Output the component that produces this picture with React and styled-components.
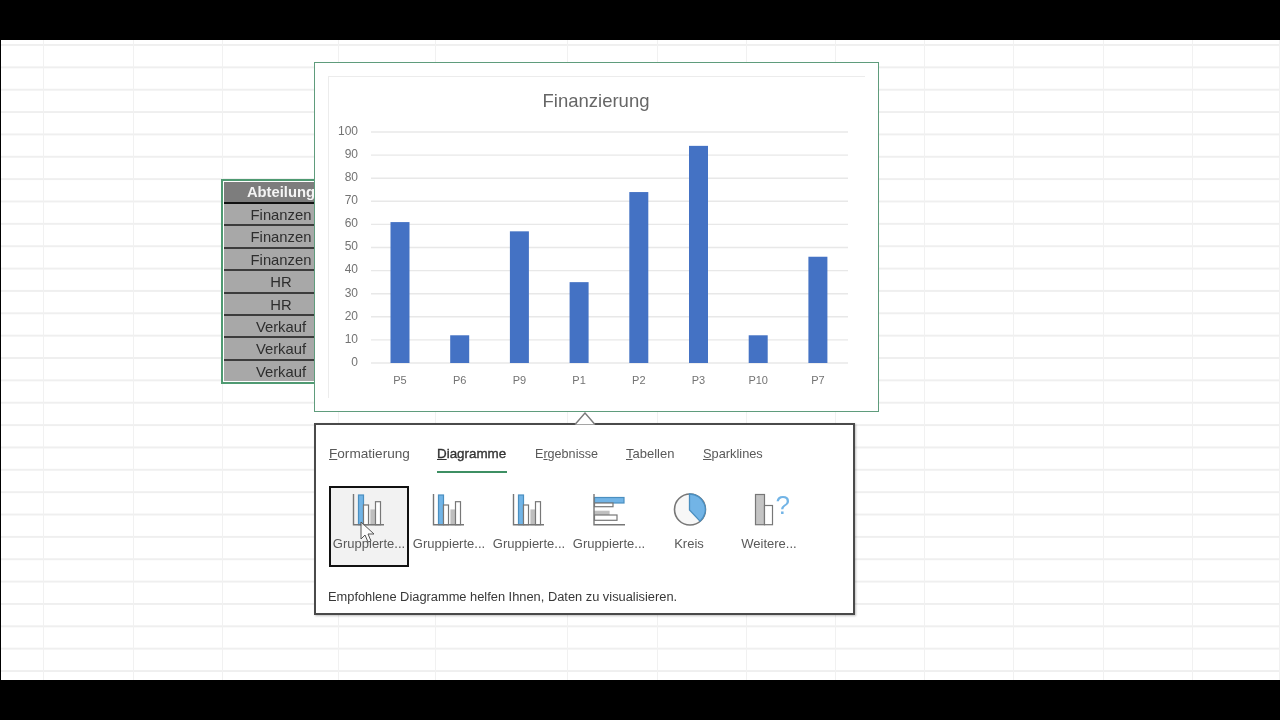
import React from "react";
import styled, { createGlobalStyle } from "styled-components";

const GlobalStyle = createGlobalStyle`
  html, body {
    margin: 0;
    padding: 0;
    background: #000;
    font-family: "Liberation Sans", Arial, sans-serif;
  }
`;

const Page = styled.div`
  width: 1280px;
  height: 720px;
  display: flex;
  flex-direction: column;
  justify-content: center;
  overflow: hidden;
  background: #000;
`;

const Sheet = styled.div`
  position: relative;
  height: 640px;
  margin-left: 1px;
  display: flex;
  background-color: #fff;
  background-image: linear-gradient(#efefef 0, #efefef 1.7px, transparent 1.7px);
  background-size: 100% 22.37px;
  background-position: 0 4px;
  filter: blur(0.6px);
`;

const Column = styled.div`
  flex: none;
  width: ${(p) => p.$width}px;
  height: 100%;
  box-sizing: border-box;
  border-right: 1.7px solid #f1f1f1;
`;

const DataTable = styled.div`
  position: absolute;
  left: 220px;
  top: 139px;
  width: 114px;
  padding: 1px;
  border: 2px solid #4f9a72;
  background: #fff;
  color: #2e2e2e;
  font-size: 14.8px;
  text-align: center;
`;

const HeaderCell = styled.div`
  height: 20px;
  line-height: 20px;
  background: #7d7d7d;
  border-bottom: 2px solid #111;
  color: #f4f4f4;
  font-weight: bold;
`;

const DataCell = styled.div`
  height: 20.4px;
  line-height: 23px;
  background: #a8a8a8;
  border-bottom: 2px solid #3c3c3c;
  &:last-child {
    border-bottom: 0;
  }
`;

const ChartPanel = styled.div`
  position: absolute;
  left: 313px;
  top: 22px;
  width: 565px;
  height: 350px;
  box-sizing: border-box;
  padding: 13px;
  background: #fff;
  border: 1.5px solid #5f9c7c;
`;

const ChartFrame = styled.div`
  height: 100%;
  box-sizing: border-box;
  border-top: 1.5px solid #ececec;
  border-left: 1.5px solid #ececec;
`;

const Popup = styled.div`
  position: absolute;
  left: 313px;
  top: 383px;
  width: 541px;
  height: 192px;
  box-sizing: border-box;
  padding: 19px 13px 0;
  background: #fff;
  border: 2px solid #4a4a4a;
  box-shadow: 1px 1px 2px rgba(0, 0, 0, 0.25);
`;

const Caret = styled.svg`
  position: absolute;
  left: 258px;
  top: -13px;
  display: block;
`;

const TabRow = styled.div`
  display: flex;
  gap: 28px;
  height: 42px;
`;

const Tab = styled.div`
  flex: none;
  width: ${(p) => p.$width}px;
  height: 27px;
  line-height: 20px;
  white-space: nowrap;
  font-size: ${(p) => p.$size}px;
  color: ${(p) => (p.$active ? "#333" : "#595959")};
  -webkit-text-stroke: ${(p) => (p.$active ? "0.35px #333" : "0")};
  border-bottom: 2px solid ${(p) => (p.$active ? "#3d8f63" : "transparent")};
`;

const TileRow = styled.div`
  display: flex;
  height: 103px;
`;

const Tile = styled.div`
  position: relative;
  flex: none;
  width: 80px;
  height: 81px;
  box-sizing: border-box;
  display: flex;
  flex-direction: column;
  align-items: center;
  padding-top: 6px;
  background: ${(p) => (p.$selected ? "#f2f2f2" : "transparent")};
  outline: ${(p) => (p.$selected ? "2px solid #111" : "none")};
  outline-offset: -2px;
`;

const TileLabel = styled.div`
  margin-top: 8px;
  font-size: 13px;
  line-height: 16px;
  color: #595959;
  white-space: nowrap;
`;

const Hint = styled.div`
  margin-left: -1px;
  font-size: 12.85px;
  line-height: 16px;
  color: #383838;
`;

const Pointer = styled.svg`
  position: absolute;
  left: 30px;
  top: 34px;
`;

const MoreSvg = styled.svg`
  margin-top: -4px;
`;

const BLUE = "#72b4e6";
const BLUE_LINE = "#4b8fc0";
const GRAY_LINE = "#777";

function ColumnIcon() {
  return (
    <svg width="36" height="36" viewBox="0 0 36 36" fill="none" strokeWidth="1.2">
      <rect x="7.5" y="3" width="5" height="29.7" fill={BLUE} stroke={BLUE_LINE} />
      <rect x="12.5" y="13" width="5" height="19.7" fill="#fff" stroke={GRAY_LINE} />
      <rect x="20" y="18" width="4.5" height="14.7" fill="#bfbfbf" stroke="#bfbfbf" />
      <rect x="24.5" y="9.7" width="5" height="23" fill="#fff" stroke={GRAY_LINE} />
      <path d="M2.5 2v30.7H33" stroke={GRAY_LINE} strokeWidth="1.4" />
    </svg>
  );
}

function BarIcon() {
  return (
    <svg width="36" height="36" viewBox="0 0 36 36" fill="none" strokeWidth="1.2">
      <rect x="3.5" y="5.5" width="29.5" height="5.5" fill={BLUE} stroke={BLUE_LINE} />
      <rect x="3.5" y="11" width="18.5" height="3.7" fill="#fff" stroke={GRAY_LINE} />
      <rect x="3.5" y="19.3" width="14.5" height="3.7" fill="#bfbfbf" stroke="#bfbfbf" />
      <rect x="3.5" y="23" width="22.5" height="5.3" fill="#fff" stroke={GRAY_LINE} />
      <path d="M3 2v30.7h31" stroke={GRAY_LINE} strokeWidth="1.4" />
    </svg>
  );
}

function PieIcon() {
  return (
    <svg width="36" height="36" viewBox="0 0 36 36" fill="none">
      <circle cx="19" cy="17.5" r="15.5" fill="#f7f7f7" stroke={GRAY_LINE} strokeWidth="1.6" />
      <path d="M18.5 2a15.5 15.5 0 0 1 10.5 27.2L18.5 18z" fill={BLUE} stroke={BLUE_LINE} strokeWidth="1.3" />
    </svg>
  );
}

function MoreIcon() {
  return (
    <MoreSvg width="42" height="40" viewBox="-3 -4 42 40" fill="none" strokeWidth="1.2">
      <rect x="4.5" y="2.5" width="9" height="30.2" fill="#c4c4c4" stroke={GRAY_LINE} />
      <rect x="13.5" y="13.5" width="8" height="19.2" fill="#fff" stroke={GRAY_LINE} />
      <text x="24.5" y="22" fontSize="26" fill={BLUE} stroke="none" fontFamily="Liberation Sans, sans-serif">
        ?
      </text>
    </MoreSvg>
  );
}

const yLabels = [100, 90, 80, 70, 60, 50, 40, 30, 20, 10, 0];
const bars = [
  { name: "P5", value: 61 },
  { name: "P6", value: 12 },
  { name: "P9", value: 57 },
  { name: "P1", value: 35 },
  { name: "P2", value: 74 },
  { name: "P3", value: 94 },
  { name: "P10", value: 12 },
  { name: "P7", value: 46 },
];

// svg coordinates start at the frame corner (329, 77)
function ColumnChart() {
  const base = 286;
  const step = 2.31;
  return (
    <svg width="530" height="318" viewBox="0 0 530 318" fontFamily="Liberation Sans, sans-serif">
      <text x="267" y="30" textAnchor="middle" fontSize="18.5" fill="#666">
        Finanzierung
      </text>
      {yLabels.map((v) => {
        const y = base - v * step;
        return (
          <g key={v}>
            <line x1="42" x2="519" y1={y} y2={y} stroke="#e8e8e8" strokeWidth="1.4" />
            <text x="29" y={y + 2.8} textAnchor="end" fontSize="12" fill="#737373">
              {v}
            </text>
          </g>
        );
      })}
      {bars.map((b, i) => {
        const cx = 71 + i * 59.7;
        return (
          <g key={b.name}>
            <rect x={cx - 9.5} y={base - b.value * step} width="19" height={b.value * step} fill="#4472c4" />
            <text x={cx} y="307" textAnchor="middle" fontSize="11" fill="#737373">
              {b.name}
            </text>
          </g>
        );
      })}
    </svg>
  );
}

const columnWidths = [43, 90, 89, 116, 97, 132, 90, 89, 89, 89, 89, 90, 89, 87];
const departments = ["Finanzen", "Finanzen", "Finanzen", "HR", "HR", "Verkauf", "Verkauf", "Verkauf"];
const tabs = [
  { before: "", key: "F", after: "ormatierung", width: 80, size: 13.6 },
  { before: "", key: "D", after: "iagramme", width: 70, size: 13.4, active: true },
  { before: "E", key: "r", after: "gebnisse", width: 63, size: 12.6 },
  { before: "", key: "T", after: "abellen", width: 49, size: 13 },
  { before: "", key: "S", after: "parklines", width: 60, size: 12.8 },
];
const tiles = [
  { label: "Gruppierte...", Icon: ColumnIcon, selected: true },
  { label: "Gruppierte...", Icon: ColumnIcon },
  { label: "Gruppierte...", Icon: ColumnIcon },
  { label: "Gruppierte...", Icon: BarIcon },
  { label: "Kreis", Icon: PieIcon },
  { label: "Weitere...", Icon: MoreIcon },
];

function App() {
  return (
    <Page>
      <GlobalStyle />
      <Sheet>
        {columnWidths.map((w, i) => (
          <Column key={i} $width={w} />
        ))}

        <DataTable>
          <HeaderCell>Abteilung</HeaderCell>
          {departments.map((d, i) => (
            <DataCell key={i}>{d}</DataCell>
          ))}
        </DataTable>

        <ChartPanel>
          <ChartFrame>
            <ColumnChart />
          </ChartFrame>
        </ChartPanel>

        <Popup>
          <Caret width="22" height="13" viewBox="0 0 22 13" fill="none">
            <path d="M1 12.5L11 1l10 11.5" fill="#fff" stroke="#7a7a7a" strokeWidth="1.4" />
          </Caret>
          <TabRow>
            {tabs.map((t) => (
              <Tab key={t.key} $active={t.active} $width={t.width} $size={t.size}>
                {t.before}
                <u>{t.key}</u>
                {t.after}
              </Tab>
            ))}
          </TabRow>
          <TileRow>
            {tiles.map(({ label, Icon, selected }, i) => (
              <Tile key={i} $selected={selected}>
                <Icon />
                <TileLabel>{label}</TileLabel>
                {selected && (
                  <Pointer width="18" height="24" viewBox="0 0 18 24">
                    <path d="M2 2v17l4-4 3 7 3-1-3-7h6z" fill="#fff" fillOpacity="0.75" stroke="#555" strokeWidth="1" />
                  </Pointer>
                )}
              </Tile>
            ))}
          </TileRow>
          <Hint>Empfohlene Diagramme helfen Ihnen, Daten zu visualisieren.</Hint>
        </Popup>
      </Sheet>
    </Page>
  );
}

export default App;
